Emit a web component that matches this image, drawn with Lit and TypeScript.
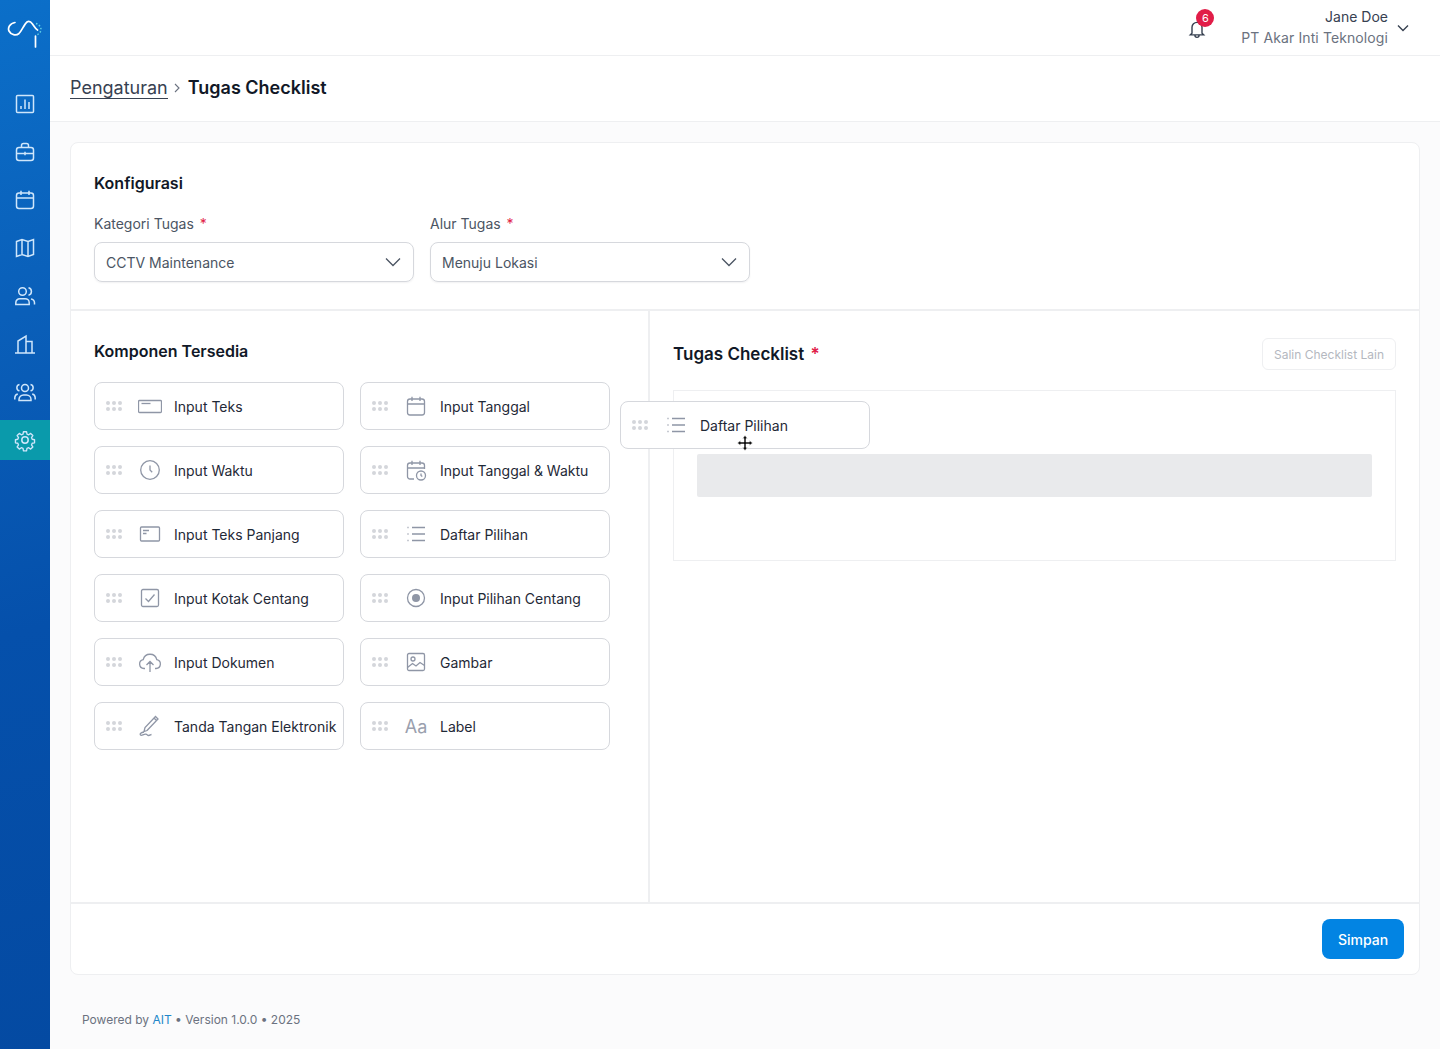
import { LitElement, css, html, svg } from 'lit'
import { customElement } from 'lit/decorators.js'

const navIcons = [
  svg`<rect x="3.5" y="3.5" width="17" height="17" rx="1"/><path d="M8 17v-3M12 17V7.5M16 17v-7"/>`,
  svg`<rect x="3.5" y="7.5" width="17" height="13" rx="2.5"/><path d="M8.5 7.500V5.500a2 2 0 0 1 2-2h3a2 2 0 0 1 2 2v2M3.500 13.500h17M12 11.800v3.400"/>`,
  svg`<rect x="3.500" y="5" width="17" height="15.500" rx="2.500"/><path d="M3.500 10h17M8 2.800V7M16 2.800V7"/>`,
  svg`<path d="M3.500 5.500 9 3.500l6 2 5.500-2v15l-5.500 2-6-2-5.500 2zM9 3.500v15M15 5.500v15"/>`,
  svg`<circle cx="9.500" cy="7.500" r="3.800"/><path d="M2.800 20.500v-1.800a4 4 0 0 1 4-4h5.400a4 4 0 0 1 4 4v1.800zM15.500 3.800a3.800 3.800 0 0 1 0 7.400M18 15a4 4 0 0 1 3.500 3.800v1.700"/>`,
  svg`<path d="M2 21h20M5 21V9l8-5v17M13 9.500h6V21"/><path d="M8 11.500h.01M10.500 11.500h.01M8 14.500h.01M10.500 14.500h.01M8 17.500h.01M10.500 17.500h.01" stroke-width="2"/>`,
  svg`<circle cx="12" cy="8" r="3.500"/><path d="M6 20.500v-1a4.500 4.500 0 0 1 4.500-4.500h3a4.500 4.500 0 0 1 4.500 4.500v1zM6.500 4.500a3.200 3.200 0 0 0 0 6.300M17.500 4.500a3.200 3.200 0 0 1 0 6.300M4.800 14a4 4 0 0 0-3 3.800v1.700M19.200 14a4 4 0 0 1 3 3.800v1.700"/>`,
  svg`<circle cx="12" cy="12" r="3.200"/><path d="M10.300 2.800h3.400l.5 2.600 1.900.8 2.200-1.500 2.400 2.400-1.500 2.200.8 1.900 2.600.5v3.400l-2.600.5-.8 1.900 1.500 2.200-2.400 2.400-2.200-1.500-1.900.8-.5 2.600h-3.400l-.5-2.600-1.900-.8-2.200 1.500-2.400-2.400 1.500-2.200-.8-1.900-2.600-.5v-3.400l2.600-.5.8-1.900-1.500-2.200 2.400-2.400 2.200 1.500 1.900-.8z" transform="translate(12 12) scale(.9) translate(-12 -12)" stroke-linejoin="round"/>`,
]

const fieldIcons: Record<string, unknown> = {
  teks: svg`<rect x="0.500" y="6.500" width="23" height="12" rx="1"/><path d="M3.500 9.500h9"/>`,
  waktu: svg`<circle cx="12" cy="12" r="9.300"/><path d="M12 7.500V12l2.200 2.200"/>`,
  panjang: svg`<rect x="2.500" y="5" width="19" height="14" rx="1"/><path d="M5 8.500h6M5 11.500h3.500"/>`,
  kotak: svg`<rect x="3.500" y="3.500" width="17" height="17" rx="1.500"/><path d="m7.500 12.500 3 3 6-7"/>`,
  dokumen: svg`<path d="M7 18.500H6a4.500 4.500 0 0 1-.8-8.900 7 7 0 0 1 13.600 0 4.500 4.500 0 0 1-.8 8.900h-1M12 22v-10M8.500 15l3.500-3.500 3.500 3.500"/>`,
  tanda: svg`<path d="m9 16.500 11-11.500-2.500-2.500L7 13.500l-1 4zM16 4l2.500 2.500"/><path d="M6 18c-3 .5-4.500 2-3.500 3s2.500-.5 5-.8c2-.2 1.500 1.300 3 1.300s2-.8 3-1"/>`,
  tanggal: svg`<rect x="3.500" y="5" width="17" height="16" rx="2.500"/><path d="M3.500 10h17M8 2.800V7M16 2.800V7"/>`,
  tanggalWaktu: svg`<path d="M10 21H6a2.500 2.500 0 0 1-2.500-2.500v-11A2.500 2.500 0 0 1 6 5h12a2.500 2.500 0 0 1 2.500 2.500V11M3.500 10h17M8 2.800V7M16 2.800V7"/><circle cx="17" cy="17.500" r="4.500"/><path d="M17 15.500v2l1.300 1"/>`,
  daftar: svg`<path d="M8 5.500h13M8 12h13M8 18.500h13M3.500 5.500h1M3.500 12h1M3.500 18.500h1"/>`,
  pilihan: svg`<circle cx="12" cy="12" r="8.500"/><circle cx="12" cy="12" r="4" fill="#8f96a6" stroke="none"/>`,
  gambar: svg`<rect x="3.500" y="3.500" width="17" height="17" rx="1.500"/><circle cx="9" cy="9" r="2"/><path d="m3.500 17.500 5-4 3.500 2.500 4-3.500 4.500 3"/>`,
}

const left = [
  ['Input Teks', 'teks'],
  ['Input Waktu', 'waktu'],
  ['Input Teks Panjang', 'panjang'],
  ['Input Kotak Centang', 'kotak'],
  ['Input Dokumen', 'dokumen'],
  ['Tanda Tangan Elektronik', 'tanda'],
]
const right = [
  ['Input Tanggal', 'tanggal'],
  ['Input Tanggal & Waktu', 'tanggalWaktu'],
  ['Daftar Pilihan', 'daftar'],
  ['Input Pilihan Centang', 'pilihan'],
  ['Gambar', 'gambar'],
  ['Label', 'label'],
]
// grid fills row by row, so zip the two columns
const items = left.flatMap((l, i) => [l, right[i]])

const chevron = html`<svg class="chev" width="18" height="18" viewBox="0 0 18 18"><path d="m2 5.500 7 7 7-7" fill="none" stroke="#4b5563" stroke-width="1.300"/></svg>`

@customElement('app-root')
export class AppRoot extends LitElement {
  static styles = css`
    :host {
      display: flex;
      width: 1440px;
      height: 1049px;
      overflow: hidden;
      position: relative;
      font-family: Inter, "Liberation Sans", sans-serif;
      color: #1f2937;
      background: #fbfbfc;
    }
    .side {
      width: 50px;
      flex: none;
      display: flex;
      flex-direction: column;
      align-items: center;
      background: linear-gradient(165deg, #0b6fc9 0%, #0a5fb9 30%, #0550ab 60%, #044aa2 100%);
    }
    .logo { margin-top: 19px; height: 29px; margin-bottom: 36px; }
    .nav {
      width: 50px;
      height: 40px;
      flex: none;
      margin-bottom: 8px;
      display: flex;
      align-items: center;
      justify-content: center;
    }
    .nav.on { background: #0a9aab; }
    .nav svg { fill: none; stroke: #cfe6fb; stroke-width: 1.500; }
    .main { flex: 1; display: flex; flex-direction: column; min-width: 0; }
    .top {
      height: 55px;
      background: #fff;
      border-bottom: 1px solid #eeeff1;
      display: flex;
      align-items: center;
      justify-content: flex-end;
      padding-right: 29px;
      flex: none;
    }
    .bell { position: relative; width: 20px; height: 20px; margin-right: 34px; margin-top: 2px; }
    .badge {
      position: absolute;
      left: 9px;
      top: -10px;
      width: 18px;
      height: 18px;
      border-radius: 50%;
      background: #e11d48;
      color: #fff;
      font-size: 11px;
      line-height: 18px;
      text-align: center;
    }
    .user { text-align: right; margin-right: 7px; }
    .name { font-size: 14px; line-height: 20px; color: #374151; }
    .org { font-size: 14px; line-height: 20px; color: #6b7280; margin-top: 1px; letter-spacing: 0.1px; }
    .crumbs {
      height: 63px;
      flex: none;
      background: #fff;
      border-bottom: 1px solid #eeeff1;
      display: flex;
      align-items: center;
      padding-left: 20px;
      font-size: 18px;
      color: #111827;
      padding-bottom: 2px;
      box-sizing: content-box;
    }
    .crumbs a { color: #374151; border-bottom: 1px solid #374151; line-height: 21px; }
    .crumbs b { font-weight: 600; }
    .crumbs svg { margin: 0 7px 0 6px; }
    .body { flex: 1; padding: 20px 20px 0; display: flex; flex-direction: column; min-height: 0; }
    .card {
      height: 833px;
      box-sizing: border-box;
      background: #fff;
      border: 1px solid #eeeff1;
      border-radius: 8px;
      display: flex;
      flex-direction: column;
    }
    .config {
      height: 168px;
      flex: none;
      box-sizing: border-box;
      padding: 30px 23px 0;
      border-bottom: 2px solid #eeeff1;
    }
    h2 { margin: 0; font-size: 16px; line-height: 20px; font-weight: 600; color: #111827; }
    .selects { display: flex; gap: 16px; margin-top: 21px; }
    .field { width: 320px; }
    .field label { display: block; font-size: 14px; line-height: 20px; color: #4b5563; margin-bottom: 8px; }
    .req { color: #e11d48; margin-left: 2px; }
    .select {
      height: 40px;
      box-sizing: border-box;
      border: 1px solid #d6d8dd;
      border-radius: 8px;
      box-shadow: 0 1px 2px rgba(16, 24, 40, .06);
      padding: 0 11px;
      display: flex;
      align-items: center;
      justify-content: space-between;
      font-size: 14px;
      color: #4b5563;
    }
    .panels { flex: 1; display: flex; min-height: 0; }
    .avail {
      width: 579px;
      flex: none;
      box-sizing: border-box;
      border-right: 2px solid #eeeff1;
      padding: 30px 0 0 23px;
    }
    .grid {
      display: grid;
      grid-template-columns: 250px 250px;
      gap: 16px;
      margin-top: 21px;
    }
    .item {
      width: 250px;
      height: 48px;
      box-sizing: border-box;
      border: 1px solid #d6d8dd;
      border-radius: 8px;
      background: #fff;
      display: flex;
      align-items: center;
      padding-left: 11px;
      font-size: 14px;
      color: #1f2937;
      white-space: nowrap;
    }
    .dots { width: 16px; flex: none; display: grid; grid-template-columns: repeat(3, 4px); gap: 2px; }
    .dots i { width: 4px; height: 4px; border-radius: 50%; background: #d4d6db; }
    .ico { width: 24px; height: 24px; margin: 0 12px 0 16px; flex: none; fill: none; stroke: #8f96a6; stroke-width: 1.300; }
    .aa { width: 24px; margin: 0 12px 0 16px; flex: none; font-size: 18px; color: #9aa0ae; text-align: center; }
    .check { flex: 1; padding: 30px 23px 0; min-width: 0; }
    .check-head { display: flex; align-items: center; justify-content: space-between; height: 32px; margin-top: -3px; }
    .check-head h2 { font-size: 17px; }
    .copy {
      height: 32px;
      box-sizing: border-box;
      border: 1px solid #eeeff1;
      border-radius: 6px;
      padding: 0 11px;
      display: flex;
      align-items: center;
      font-size: 12px;
      color: #b4b8c0;
    }
    .drop {
      margin-top: 20px;
      height: 171px;
      box-sizing: border-box;
      border: 1px solid #eeeff1;
      padding: 63px 23px 0;
    }
    .slot { height: 43px; background: #e9eaec; border-radius: 2px; }
    .foot {
      height: 70px;
      flex: none;
      border-top: 2px solid #eeeff1;
      display: flex;
      justify-content: flex-end;
      align-items: center;
      padding-right: 15px;
    }
    .save {
      width: 82px;
      height: 40px;
      border-radius: 8px;
      background: #0284e3;
      color: #fff;
      font-size: 14px;
      display: flex;
      align-items: center;
      justify-content: center;
      font-weight: 500;
    }
    .powered { padding: 37px 0 0 12px; font-size: 12px; line-height: 16px; color: #6b7280; }
    .powered span { color: #2186c9; }
    .drag { position: absolute; left: 620px; top: 401px; }
    .cursor { position: absolute; left: 737px; top: 435px; }
  `

  dots() {
    return html`<div class="dots">${Array.from({ length: 6 }, () => html`<i></i>`)}</div>`
  }

  item(label: string, icon: string) {
    return html`<div class="item">
      ${this.dots()}
      ${icon === 'label'
        ? html`<span class="aa">Aa</span>`
        : html`<svg class="ico" viewBox="0 0 24 24">${fieldIcons[icon]}</svg>`}
      <span>${label}</span>
    </div>`
  }

  render() {
    return html`
      <aside class="side">
        <svg class="logo" width="36" height="29" viewBox="0 0 36 29" fill="none">
          <path d="M2 14c1-5 5-8 9-8s6 3 8 6 5 7 9 6 6-4 6-6" stroke="none"/>
          <path d="M8 3.500C3 4 .5 9 2 12c2 4 7 5 10 2.500 3-3 5-9 8-11.500 2-1.200 4 0 5.500 2 1.500 2 3 5 5 6" stroke="#fff" stroke-width="1.700" stroke-linecap="round"/>
          <path d="M29 4.500c4 1.500 6 5 4.500 8-1 2-3 3.500-5 3.500" stroke="#5fd0e8" stroke-width="1.500" stroke-dasharray="1.500 1.800"/>
          <path d="M30 1.500V17" stroke="none"/>
          <path d="M29 10.500v17" stroke="#fff" stroke-width="0"/>
          <path d="M23.500 10v11" stroke="#fff" stroke-width="1.700" stroke-linecap="round" transform="translate(5 7)"/>
        </svg>
        ${navIcons.map((icon, i) => html`<div class="nav ${i === 7 ? 'on' : ''}">
          <svg width="24" height="24" viewBox="0 0 24 24">${icon}</svg>
        </div>`)}
      </aside>
      <div class="main">
        <header class="top">
          <div class="bell">
            <svg width="20" height="20" viewBox="0 0 24 24" fill="none" stroke="#374151" stroke-width="1.700">
              <path d="M6 17V10a6 6 0 0 1 12 0v7l2 2H4zM9.500 19.500a2.500 2.500 0 0 0 5 0"/>
            </svg>
            <div class="badge">6</div>
          </div>
          <div class="user">
            <div class="name">Jane Doe</div>
            <div class="org">PT Akar Inti Teknologi</div>
          </div>
          <svg width="16" height="16" viewBox="0 0 16 16"><path d="m3 5.500 5 5 5-5" fill="none" stroke="#374151" stroke-width="1.400"/></svg>
        </header>
        <div class="crumbs">
          <a>Pengaturan</a>
          <svg width="7" height="10" viewBox="0 0 7 10"><path d="m1 1 4 4-4 4" fill="none" stroke="#6b7280" stroke-width="1.100"/></svg>
          <b>Tugas Checklist</b>
        </div>
        <div class="body">
          <section class="card">
            <div class="config">
              <h2>Konfigurasi</h2>
              <div class="selects">
                <div class="field">
                  <label>Kategori Tugas <span class="req">*</span></label>
                  <div class="select">CCTV Maintenance ${chevron}</div>
                </div>
                <div class="field">
                  <label>Alur Tugas <span class="req">*</span></label>
                  <div class="select">Menuju Lokasi ${chevron}</div>
                </div>
              </div>
            </div>
            <div class="panels">
              <div class="avail">
                <h2>Komponen Tersedia</h2>
                <div class="grid">${items.map(([l, i]) => this.item(l, i))}</div>
              </div>
              <div class="check">
                <div class="check-head">
                  <h2>Tugas Checklist <span class="req">*</span></h2>
                  <div class="copy">Salin Checklist Lain</div>
                </div>
                <div class="drop"><div class="slot"></div></div>
              </div>
            </div>
            <div class="foot"><div class="save">Simpan</div></div>
          </section>
          <div class="powered">Powered by <span>AIT</span> • Version 1.0.0 • 2025</div>
        </div>
      </div>
      <div class="drag">${this.item('Daftar Pilihan', 'daftar')}</div>
      <svg class="cursor" width="16" height="16" viewBox="0 0 16 16" fill="#111" stroke="#fff" stroke-width=".5">
        <path d="M8 .5 10.500 3.500H9V7h3.500V5.500L15.500 8l-3 2.500V9H9v3.500h1.500L8 15.500l-2.500-3H7V9H3.500v1.500L.5 8l3-2.500V7H7V3.500H5.500z"/>
      </svg>
    `
  }
}

declare global {
  interface HTMLElementTagNameMap {
    'app-root': AppRoot
  }
}
